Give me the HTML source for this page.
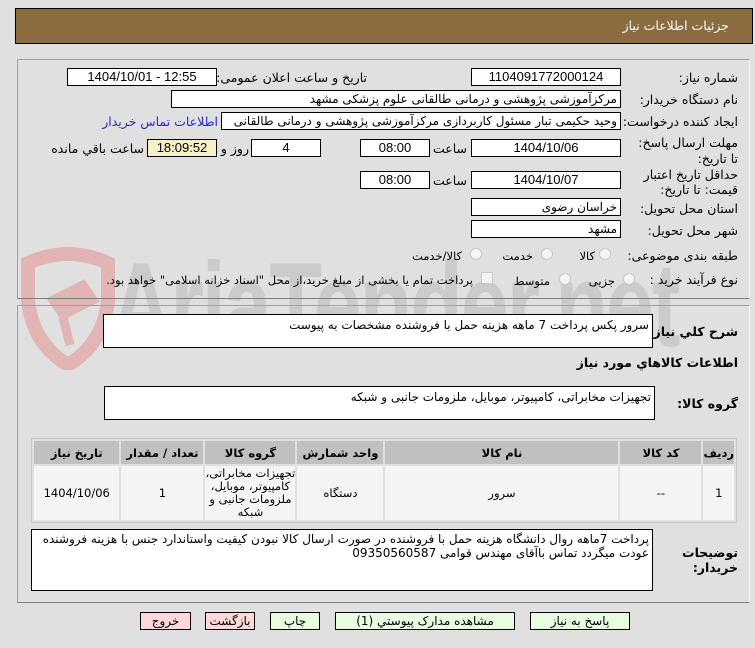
<!DOCTYPE html>
<html><head><meta charset="utf-8">
<style>
*{box-sizing:border-box;margin:0;padding:0}
body{width:755px;height:648px;background:#e0e0e0;font-family:"DejaVu Sans","Liberation Sans",sans-serif;font-size:11.5px;color:#000;position:relative;overflow:hidden}
.a{position:absolute;white-space:nowrap}
.r{direction:rtl;text-align:right}
.box{position:absolute;background:#fff;border:1px solid #000;height:18px;line-height:16px;text-align:center;font-family:"Liberation Sans","DejaVu Sans",sans-serif;font-size:13px}
.tb{position:absolute;background:#fff;border:1px solid #000;height:18px;line-height:16px;direction:rtl;text-align:right;padding-right:3px;font-size:12px}
.lbl{position:absolute;direction:rtl;text-align:right;right:17px;font-size:12.5px}
.panel{position:absolute;border:1px solid #a0a0a0;border-right-color:#fff;border-bottom-color:#808080}
.radio{position:absolute;width:12px;height:12px;border-radius:50%;border:1px solid #c8c8c8;background:#f4f4f4}
.ta{position:absolute;background:#fff;border:1px solid #000;direction:rtl;text-align:right;padding:2px 3px;font-size:12px;line-height:19px}
.btn{position:absolute;top:612px;height:18px;border:1px solid #000;text-align:center;line-height:16px;font-size:12px}
table{position:absolute;left:31px;top:438px;width:706px;border-collapse:separate;border-spacing:2px;background:#e0e0e0;border:1px solid #c8c8c8;direction:rtl;font-size:11.5px}
th{background:#c0c0c0;height:23px;font-weight:bold}
td{background:#f4f4f4;text-align:center;height:54px;line-height:13px}
</style></head><body>
<svg class="a" style="left:18px;top:245px" width="100" height="125" viewBox="0 0 100 125">
<path d="M10 18 Q50 0 90 18 L90 55 Q86 98 50 120 Q14 98 10 55 Z" fill="none" stroke="#e2b4b4" stroke-width="14"/>
<path d="M35 55 L65 40 L75 55 L45 70 Z M45 72 L52 100" fill="#e2b4b4" stroke="#e2b4b4" stroke-width="9"/>
</svg>
<div class="a" style="left:110px;top:240px;font-size:120px;font-weight:bold;color:#cbcbcb;font-family:'Liberation Sans',sans-serif;letter-spacing:-3px;transform:scaleX(0.72);transform-origin:left;line-height:130px">AriaTender.net</div>

<div class="a" style="left:15px;top:8px;width:738px;height:36px;background:#8b6b40;border:1px solid #000"></div>
<div class="a r" style="right:26px;top:18px;color:#fff;font-size:12.5px">جزئیات اطلاعات نیاز</div>

<div class="panel" style="left:17px;top:59px;width:733px;height:240px"></div>
<div class="panel" style="left:17px;top:305px;width:733px;height:298px"></div>

<div class="lbl" style="top:70px">شماره نیاز:</div>
<div class="box" style="left:471px;top:68px;width:150px">1104091772000124</div>
<div class="a r" style="left:222px;top:70px;width:145px;font-size:12.5px">تاریخ و ساعت اعلان عمومی:</div>
<div class="box" style="left:67px;top:68px;width:150px">1404/10/01 - 12:55</div>

<div class="lbl" style="top:92px">نام دستگاه خریدار:</div>
<div class="tb" style="left:171px;top:90px;width:450px">مرکزآموزشی  پژوهشی و درمانی طالقانی   علوم پزشکی مشهد</div>

<div class="lbl" style="top:114px">ایجاد کننده درخواست:</div>
<div class="tb" style="left:221px;top:112px;width:400px">وحید حکیمی تبار مسئول کاربردازی مرکزآموزشی  پژوهشی و درمانی طالقانی</div>
<div class="a r" style="left:110px;top:114px;width:108px;color:#2a2ad0;font-size:12.5px">اطلاعات تماس خریدار</div>

<div class="lbl" style="top:135px;line-height:16px;width:110px">مهلت ارسال پاسخ: تا تاریخ:</div>
<div class="box" style="left:471px;top:139px;width:150px">1404/10/06</div>
<div class="a r" style="left:433px;top:141px;width:34px;font-size:12.5px">ساعت</div>
<div class="box" style="left:360px;top:139px;width:70px">08:00</div>
<div class="box" style="left:251px;top:139px;width:70px">4</div>
<div class="a r" style="left:222px;top:141px;width:27px;font-size:12.5px">روز و</div>
<div class="box" style="left:147px;top:139px;width:70px;background:#f5f0c8">18:09:52</div>
<div class="a r" style="left:50px;top:141px;width:94px;font-size:12.5px">ساعت باقي مانده</div>

<div class="lbl" style="top:167px;line-height:15px;width:110px">حداقل تاریخ اعتبار قیمت: تا تاریخ:</div>
<div class="box" style="left:471px;top:171px;width:150px">1404/10/07</div>
<div class="a r" style="left:433px;top:173px;width:34px;font-size:12.5px">ساعت</div>
<div class="box" style="left:360px;top:171px;width:70px">08:00</div>

<div class="lbl" style="top:201px">استان محل تحویل:</div>
<div class="tb" style="left:471px;top:198px;width:150px">خراسان رضوی</div>
<div class="lbl" style="top:223px">شهر محل تحویل:</div>
<div class="tb" style="left:471px;top:220px;width:150px">مشهد</div>

<div class="lbl" style="top:248px">طبقه بندی موضوعی:</div>
<div class="radio" style="left:599px;top:248px"></div><div class="a r" style="left:570px;top:249px;width:25px">کالا</div>
<div class="radio" style="left:541px;top:248px"></div><div class="a r" style="left:500px;top:249px;width:33px">خدمت</div>
<div class="radio" style="left:470px;top:248px"></div><div class="a r" style="left:405px;top:249px;width:57px">کالا/خدمت</div>

<div class="lbl" style="top:272px">نوع فرآیند خرید :</div>
<div class="radio" style="left:623px;top:273px"></div><div class="a r" style="left:583px;top:274px;width:32px">جزیی</div>
<div class="radio" style="left:559px;top:273px"></div><div class="a r" style="left:510px;top:274px;width:40px">متوسط</div>
<div class="a" style="left:481px;top:272px;width:12px;height:12px;border:1px solid #c8c8c8;background:#f4f4f4"></div>
<div class="a r" style="left:85px;top:273px;width:388px">پرداخت تمام یا بخشی از مبلغ خرید،از محل "اسناد خزانه اسلامی" خواهد بود.</div>

<div class="lbl" style="top:324px;font-weight:bold">شرح کلي نياز:</div>
<div class="ta" style="left:103px;top:314px;width:550px;height:34px;line-height:16px">سرور پکس پرداخت 7 ماهه هزینه  حمل با فروشنده  مشخصات به پیوست</div>
<div class="lbl" style="top:355px;font-weight:bold">اطلاعات کالاهاي مورد نياز</div>
<div class="lbl" style="top:396px;font-weight:bold">گروه کالا:</div>
<div class="ta" style="left:104px;top:386px;width:551px;height:34px;line-height:16px">تجهیزات مخابراتی، کامپیوتر، موبایل، ملزومات جانبی و شبکه</div>

<table>
<tr><th style="width:27px">ردیف</th><th style="width:81px">کد کالا</th><th style="width:233px">نام کالا</th><th style="width:86px">واحد شمارش</th><th style="width:90px">گروه کالا</th><th style="width:82px">تعداد / مقدار</th><th>تاریخ نیاز</th></tr>
<tr><td>1</td><td>--</td><td>سرور</td><td>دستگاه</td><td>تجهیزات مخابراتی، کامپیوتر، موبایل، ملزومات جانبی و شبکه</td><td>1</td><td>1404/10/06</td></tr>
</table>

<div class="lbl" style="top:545px;font-weight:bold;line-height:15px;width:70px">توضیحات خریدار:</div>
<div class="ta" style="left:31px;top:529px;width:622px;height:62px;line-height:14px;white-space:normal">پرداخت 7ماهه روال دانشگاه هزینه حمل با فروشنده در صورت ارسال کالا نبودن کیفیت واستاندارد جنس با هزینه فروشنده عودت میگردد تماس باآقای مهندس قوامی 09350560587</div>

<div class="btn" style="left:140px;width:51px;background:#fcd8d8">خروج</div>
<div class="btn" style="left:205px;width:50px;background:#fcd8d8">بازگشت</div>
<div class="btn" style="left:270px;width:50px;background:#e8fce0">چاپ</div>
<div class="btn" style="left:335px;width:180px;background:#e8fce0">مشاهده مدارک پیوستي (1)</div>
<div class="btn" style="left:530px;width:100px;background:#e8fce0">پاسخ به نیاز</div>
</body></html>
